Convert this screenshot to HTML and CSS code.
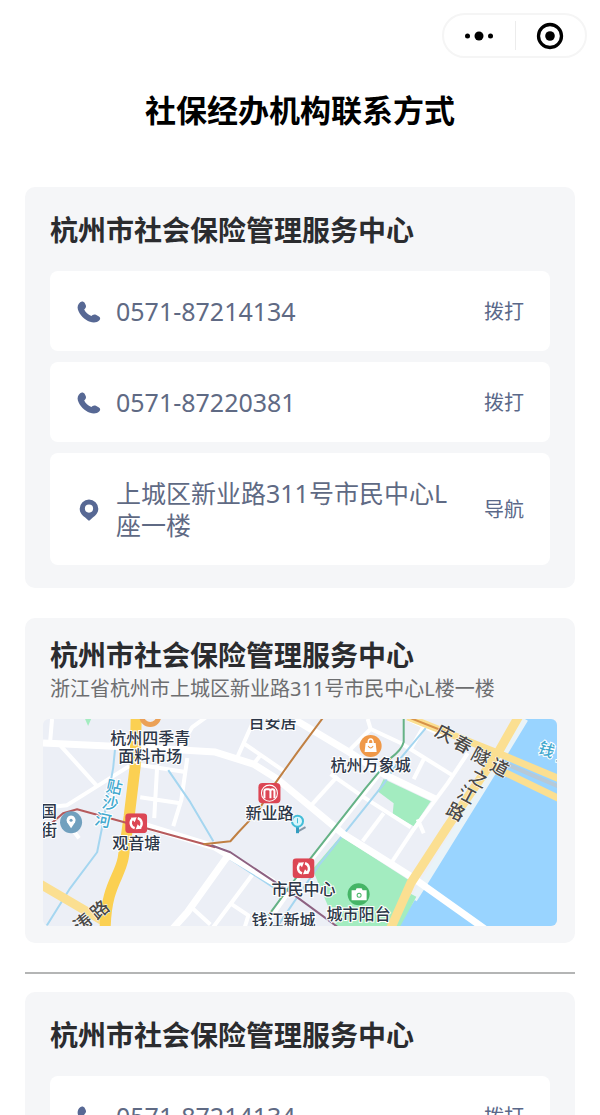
FILE: index.html
```
<!DOCTYPE html>
<html lang="zh-CN">
	<head>
		<meta charset="UTF-8">
		<meta name="viewport" content="width=device-width, initial-scale=1">
		<title>社保经办机构联系方式</title>
		<link rel="stylesheet" href="styles.css">
	</head>
	<body>
		<!-- 公用图标 -->
		<svg class="symbols" aria-hidden="true">
			<symbol id="phone" viewBox="0 0 24 24">
				<path d="M3.200 2.200C4.800 1.100 6.800 1.500 7.700 3.100l1 2c.6 1.300.3 2.500-.6 3.400l-.9 1c1.200 2.800 3.800 5.200 7.200 6.600l1.200-1c1-.8 2.200-.9 3.300-.3l3 1.600c1.500.9 1.700 2.600.5 3.900-2.300 2.500-6 2.800-9.400 1.500C7.500 19.700 2.600 14.900.9 9.400.1 6.700 1 3.700 3.200 2.200z"/>
			</symbol>
			<symbol id="pin" viewBox="0 0 24 24">
				<path fill-rule="evenodd" d="M12 1.500a9.300 9.300 0 0 0-9.300 9.200c0 4.300 2.800 6.700 5.500 8.800l3 2.800a1.200 1.200 0 0 0 1.600 0l3-2.800c2.700-2.100 5.500-4.500 5.500-8.800A9.300 9.300 0 0 0 12 1.500zm0 5a4.100 4.100 0 1 1 0 8.200 4.100 4.100 0 0 1 0-8.200z"/>
			</symbol>
			<symbol id="metro" viewBox="0 0 22 20">
				<rect width="22" height="20" rx="4" fill="#dc4654"/>
				<path d="M7.500 5.500a5.500 5.500 0 0 0 2 9.500M14.500 14.500a5.500 5.500 0 0 0-2-9.500" fill="none" stroke="#fff" stroke-width="2.400"/>
				<path d="M5.500 4.500l6-.5-2 5zM16.500 15.500l-6 .5 2-5z" fill="#fff"/>
			</symbol>
		</svg>

		<div class="page">
			<header class="header">
				<div class="capsule">
					<button class="capsule-btn" aria-label="更多">
						<svg width="30" height="30" viewBox="0 0 30 30"><circle cx="3.500" cy="15" r="2.500"/><circle cx="15" cy="15" r="4.500"/><circle cx="26.500" cy="15" r="2.500"/></svg>
					</button>
					<button class="capsule-btn" aria-label="关闭">
						<svg width="30" height="30" viewBox="0 0 30 30"><circle cx="15" cy="15" r="11.500" fill="none" stroke="#000" stroke-width="3.300"/><circle cx="15" cy="15" r="4.800"/></svg>
					</button>
				</div>
				<h1 class="title">社保经办机构联系方式</h1>
			</header>

			<section class="card">
				<h2 class="name">杭州市社会保险管理服务中心</h2>
				<ul class="list">
					<li class="item">
						<svg class="icon"><use href="#phone"/></svg>
						<span class="text">0571-87214134</span>
						<button class="action">拨打</button>
					</li>
					<li class="item">
						<svg class="icon"><use href="#phone"/></svg>
						<span class="text">0571-87220381</span>
						<button class="action">拨打</button>
					</li>
					<li class="item">
						<svg class="icon"><use href="#pin"/></svg>
						<span class="text">上城区新业路311号市民中心L座一楼</span>
						<button class="action">导航</button>
					</li>
				</ul>
			</section>

			<section class="card map-card">
				<h2 class="name">杭州市社会保险管理服务中心</h2>
				<p class="address">浙江省杭州市上城区新业路311号市民中心L楼一楼</p>
				<svg class="map" viewBox="0 0 513 207" role="img" aria-label="地图">
					<rect width="513" height="207" fill="#eceff6"/>
					<!-- 绿地 -->
					<g fill="#a3ecc0">
						<path d="M297 117l73 47-13 43h-64l-24-57z"/>
						<path d="M340 60l47 22-17 25-21-12 1-11-16-12z"/>
						<path d="M42 0h6l-3 7z"/>
					</g>
					<!-- 钱塘江 -->
					<path d="M481 0l-35 60-64 104-28 43h159V0z" fill="#99d4ff"/>
					<path d="M481 0l-36 59-65 105-10 16" fill="none" stroke="#e9f3f8" stroke-width="7"/>
					<path d="M370 176l-18 33" stroke="#a3ecc0" stroke-width="6"/>
					<!-- 小路 -->
					<g class="road small">
						<path d="M9 0L7 24M17 26l37 41M-3 89l27-3 62-39M24 103l12 16M137 28l12-20 14-10"/>
						<path d="M114 46l-3 53M144 39l-6 42-8 26M97 78l40 6M97 46l45 7"/>
						<path d="M211 0l-17 38M200 24l42 29M218 35l-8 10"/>
						<path d="M324 0l3 10 30 14 53 33M327 10l-20 20M364 0l38 18M382 4l-15 26"/>
						<path d="M424 34l-20 30-34 46-24 36M380 40l-10 20M374 100l6 14"/>
						<path d="M294 57l-27 30M287 55l33 23 47 30M340 94l-21 28M340 50l-73 92-42 60"/>
						<path d="M210 154l-41 55M147 187l20 18M187 184l18 12-4 13"/>
					</g>
					<!-- 水系 -->
					<g class="stream">
						<path d="M72 29l-2 20-10 54-6 30-27 36-25 40"/>
						<path d="M125 51l22 32 23 39M187 140l43 28"/>
						<path d="M382 9l-25 30-17 26-64 80-42 62"/>
					</g>
					<!-- 主路 -->
					<path class="road" d="M0 24l87 4 85 5 38 12 24 15 66 55 40 25 30 19 73 52"/>
					<path class="road" d="M97 105l75 23 58 35M187 133l-43 60-16 18"/>
					<path class="road" d="M236 -8l21 12 50 30 33 21 52 25"/>
					<path class="yellow pale" d="M-4 164l34 20 34 20"/>
					<path class="yellow" d="M93 -3l-1 50-6 50-6 42c-4 20-17 28-18 70"/>
					<path class="yellow pale" d="M475 -3l-21 37-50 73-37 57-20 45"/>
					<path class="yellow pale thin" d="M364 -2l90 36 62 26M450 48l66 32"/>
					<path d="M458 43l58 25" stroke="#b6c9d8" stroke-width="4"/>
					<!-- 地铁 -->
					<g class="line">
						<path d="M5 107l15-13 14-4 138 38" stroke="#b65a5c"/>
						<path d="M168 126l19 7 60 40 49 36" stroke="#8d6282"/>
						<path d="M160 125l27-3 8-9 19-20 15-25 25-35 26-35" stroke="#c08043"/>
						<path d="M360 -2v25q-2 8-13 16l-25 30-55 70-42 57" stroke="#65b286"/>
						<path d="M364 -2l38 15" stroke="#d79249"/>
					</g>
					<!-- 标记 -->
					<use href="#metro" x="82" y="94" width="22" height="20"/>
					<use href="#metro" x="249" y="139" width="22" height="20"/>
					<rect x="215" y="64" width="22" height="20" rx="4" fill="#dc4654"/>
					<circle cx="226" cy="74" r="8" fill="none" stroke="#fff"/>
					<path d="M221 79v-7q0-2 2-2h2q2 0 2 2v7M227 72q0-2 2-2t2 2v7" fill="none" stroke="#fff" stroke-width="2"/>
					<circle cx="28" cy="103" r="11" fill="#71a0be"/>
					<path d="M28 109l-4-6a4.500 4.500 0 1 1 8 0z" fill="#fff"/>
					<circle cx="28" cy="101" r="1.500" fill="#71a0be"/>
					<circle cx="107" cy="-3" r="8.500" fill="none" stroke="#eba056" stroke-width="5"/>
					<circle cx="327" cy="27" r="11" fill="#ef9848"/>
					<path d="M322 24h10l1 9h-12z" fill="#fff"/>
					<path d="M324.500 24q0-4 2.500-4t2.500 4" fill="none" stroke="#fff" stroke-width="1.500"/>
					<path d="M324.500 27q2.500 4 5 0" fill="none" stroke="#ef9848"/>
					<circle cx="315" cy="175" r="11" fill="#45b566"/>
					<path d="M308 171h4l1-2h5l1 2h4v10h-15z" fill="#fff"/>
					<circle cx="315.500" cy="176" r="2" fill="none" stroke="#45b566"/>
					<path d="M255 112l7-4" stroke="#8496a6" stroke-width="2"/>
					<path d="M254 107v7" stroke="#329dc0" stroke-width="3"/>
					<circle cx="254" cy="102" r="5.500" fill="#d9f6fb" stroke="#43bdd8" stroke-width="2"/>
					<path d="M254 99v5" stroke="#43bdd8"/>
					<!-- 地名 -->
					<g class="label">
						<text x="107" y="25">杭州四季青</text>
						<text x="107" y="43">面料市场</text>
						<text x="229" y="9">百安居</text>
						<text x="327" y="52">杭州万象城</text>
						<text x="226" y="100">新业路</text>
						<text x="93" y="130">观音塘</text>
						<text x="260" y="176">市民中心</text>
						<text x="315" y="201">城市阳台</text>
						<text x="240" y="207">钱江新城</text>
						<text x="6" y="98">国</text>
						<text x="6" y="117">街</text>
					</g>
					<g class="street">
						<text x="390 408 426 445" y="16 27 39 50" rotate="28">庆春隧道</text>
						<text x="424 412 401" y="61 77 94" rotate="28">之江路</text>
						<text x="37 54" y="214 201" rotate="-40">涛路</text>
					</g>
					<g class="water">
						<text x="62 58 51" y="72 88 105" rotate="12">贴沙河</text>
						<text x="493 511" y="33 43" rotate="22">钱塘</text>
					</g>
				</svg>
			</section>

			<hr class="divider">

			<section class="card">
				<h2 class="name">杭州市社会保险管理服务中心</h2>
				<ul class="list">
					<li class="item">
						<svg class="icon"><use href="#phone"/></svg>
						<span class="text">0571-87214134</span>
						<button class="action">拨打</button>
					</li>
				</ul>
			</section>
		</div>
	</body>
</html>
```
FILE: styles.css
```
*{
	margin: 0;
	padding: 0;
	box-sizing: border-box;
}
body{
	background-color: #fff;
	font-family: "Noto Sans", "Noto Sans CJK SC", sans-serif;
}
ul{
	list-style: none;
}
button{
	border: none;
	background: none;
	font-family: inherit;
	cursor: pointer;
}
.symbols{
	display: none;
}
/*整页滚动区域*/
.page{
	height: 100vh;
	padding: 0 25px;
	overflow-y: auto;
	scrollbar-width: none;
}

/*顶部*/
.header{
	display: flex;
	flex-direction: column;
	padding: 13px 0 57px;
}
.capsule{
	display: flex;
	align-self: flex-end;
	width: 145px;
	height: 45px;
	margin-right: -12px;
	border: 2px solid #f5f5f5;
	border-radius: 23px;
}
.capsule-btn{
	display: flex;
	flex: 1;
	align-items: center;
	justify-content: center;
}
.capsule-btn + .capsule-btn{
	position: relative;
}
/*中间竖线*/
.capsule-btn + .capsule-btn::before{
	content: "";
	position: absolute;
	left: 0;
	top: 6px;
	bottom: 6px;
	width: 1px;
	background-color: #ececec;
}
.title{
	margin-top: 32px;
	font-size: 31px;
	line-height: 40px;
	text-align: center;
	color: #000;
}

/*卡片*/
.card{
	padding: 23px 25px;
	border-radius: 10px;
	background-color: #f5f6f8;
}
.name{
	font-size: 28px;
	line-height: 40px;
	color: #2b2c2f;
}
.list{
	display: flex;
	flex-direction: column;
	gap: 11px;
	margin-top: 21px;
}
.item{
	display: flex;
	align-items: center;
	padding: 24px 25px;
	border-radius: 8px;
	background-color: #fff;
}
.icon{
	flex: none;
	width: 24px;
	height: 24px;
	margin: 2px 15px 0 2px;
	fill: #576894;
}
.text{
	flex: 1;
	font-size: 25px;
	line-height: 32px;
	color: #5f6a84;
}
.action{
	flex: none;
	margin: 2px 1px 0 20px;
	font-size: 20px;
	line-height: 28px;
	color: #5a6889;
}

/*地图卡片*/
.map-card{
	margin-top: 30px;
	padding: 17px 18px;
}
.map-card .name,
.map-card .address{
	padding: 0 7px;
}
.address{
	font-size: 20px;
	line-height: 28px;
	color: #6d6e70;
}
.map{
	display: block;
	width: 100%;
	margin-top: 16px;
	border-radius: 6px;
}
.map path{
	stroke-linejoin: round;
}
.road{
	fill: none;
	stroke: #fff;
	stroke-width: 7px;
}
.road.small{
	stroke-width: 4px;
}
.yellow{
	fill: none;
	stroke: #fbd052;
	stroke-width: 11px;
}
.yellow.pale{
	stroke: #fbdf91;
	stroke-width: 9px;
}
.yellow.thin{
	stroke-width: 7px;
}
.stream{
	fill: none;
	stroke: #a5d6f0;
	stroke-width: 2px;
}
.line{
	fill: none;
	stroke-width: 2px;
}
.label, .street, .water{
	font-size: 16px;
	font-weight: 500;
	paint-order: stroke;
	stroke: #fff;
	stroke-width: 2px;
}
.label{
	fill: #2d3748;
	text-anchor: middle;
}
.street{
	font-size: 18px;
	fill: #4b4a48;
	stroke-width: 1px;
}
.water{
	fill: #43a9cf;
}

.divider{
	height: 2px;
	margin: 29px 0 18px;
	border: none;
	background-color: #b4b5b5;
}
```
